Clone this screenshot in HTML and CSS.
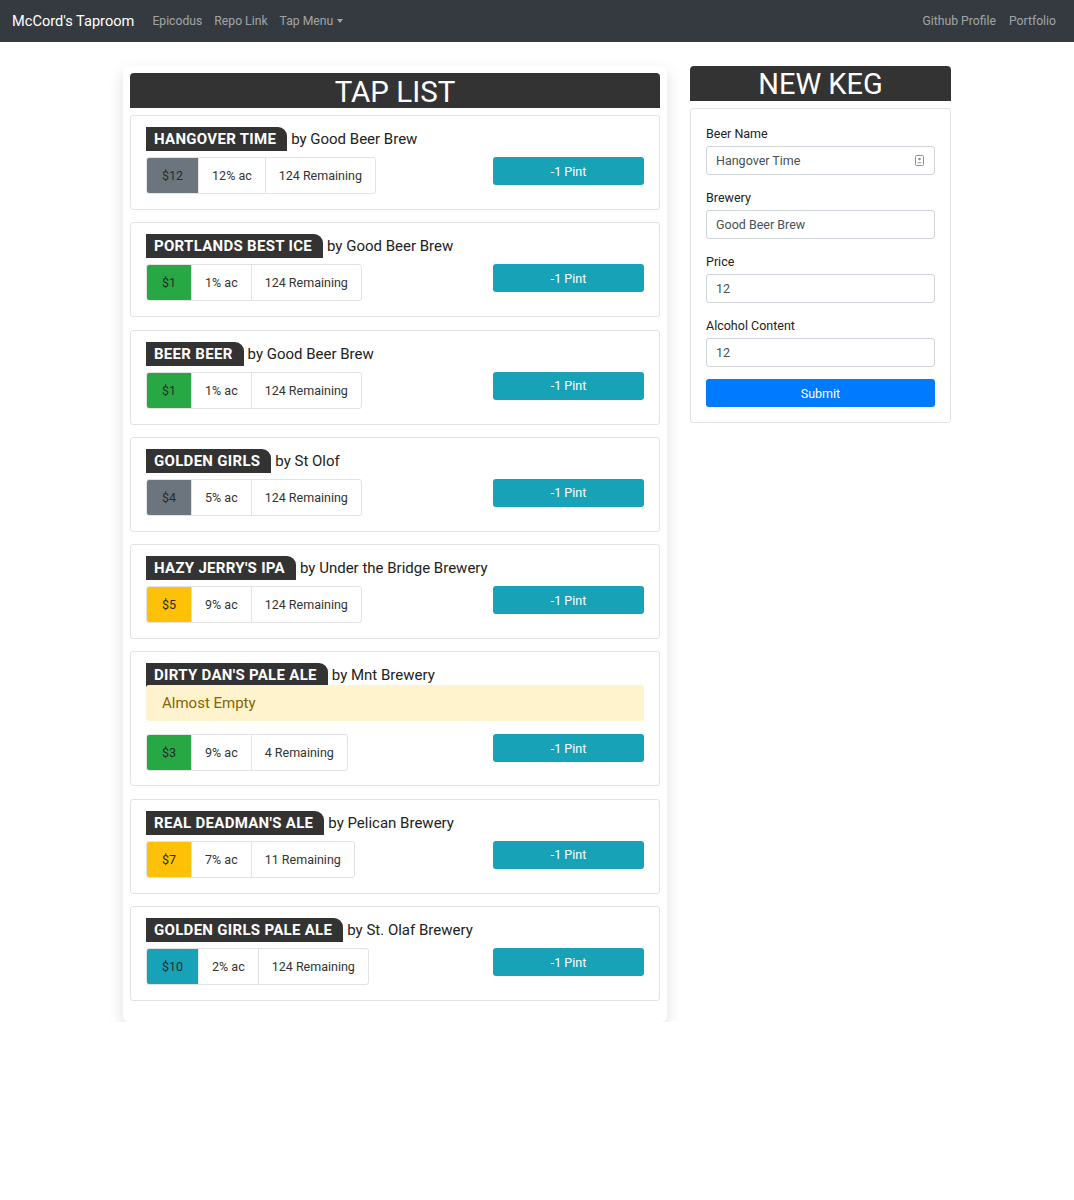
FILE: index.html
```html
<!DOCTYPE html>
<html>
<head>
<meta charset="utf-8">
<title>McCord's Taproom</title>
<link rel="stylesheet" href="styles.css">
</head>
<body>
<nav class="navbar">
  <div class="nav-left">
    <span class="brand">McCord's Taproom</span>
    <span class="nav-link">Epicodus</span>
    <span class="nav-link">Repo Link</span>
    <span class="nav-link dropdown">Tap Menu<span class="caret"></span></span>
  </div>
  <div class="nav-right">
    <span class="nav-link">Github Profile</span>
    <span class="nav-link">Portfolio</span>
  </div>
</nav>

<main class="main">
  <section class="tap-panel">
    <h1 class="panel-head tap-head">TAP LIST</h1>

    <div class="keg">
      <div class="keg-title"><span class="keg-name">HANGOVER TIME</span><span class="keg-by">by Good Beer Brew</span></div>
      <div class="keg-row">
        <div class="keg-info"><span class="cell price gray">$12</span><span class="cell">12% ac</span><span class="cell">124 Remaining</span></div>
        <button class="pint">-1 Pint</button>
      </div>
    </div>

    <div class="keg">
      <div class="keg-title"><span class="keg-name">PORTLANDS BEST ICE</span><span class="keg-by">by Good Beer Brew</span></div>
      <div class="keg-row">
        <div class="keg-info"><span class="cell price green">$1</span><span class="cell">1% ac</span><span class="cell">124 Remaining</span></div>
        <button class="pint">-1 Pint</button>
      </div>
    </div>

    <div class="keg">
      <div class="keg-title"><span class="keg-name">BEER BEER</span><span class="keg-by">by Good Beer Brew</span></div>
      <div class="keg-row">
        <div class="keg-info"><span class="cell price green">$1</span><span class="cell">1% ac</span><span class="cell">124 Remaining</span></div>
        <button class="pint">-1 Pint</button>
      </div>
    </div>

    <div class="keg">
      <div class="keg-title"><span class="keg-name">GOLDEN GIRLS</span><span class="keg-by">by St Olof</span></div>
      <div class="keg-row">
        <div class="keg-info"><span class="cell price gray">$4</span><span class="cell">5% ac</span><span class="cell">124 Remaining</span></div>
        <button class="pint">-1 Pint</button>
      </div>
    </div>

    <div class="keg">
      <div class="keg-title"><span class="keg-name">HAZY JERRY'S IPA</span><span class="keg-by">by Under the Bridge Brewery</span></div>
      <div class="keg-row">
        <div class="keg-info"><span class="cell price yellow">$5</span><span class="cell">9% ac</span><span class="cell">124 Remaining</span></div>
        <button class="pint">-1 Pint</button>
      </div>
    </div>

    <div class="keg tall">
      <div class="keg-title"><span class="keg-name">DIRTY DAN'S PALE ALE</span><span class="keg-by">by Mnt Brewery</span></div>
      <div class="alert">Almost Empty</div>
      <div class="keg-row after-alert">
        <div class="keg-info"><span class="cell price green">$3</span><span class="cell">9% ac</span><span class="cell">4 Remaining</span></div>
        <button class="pint">-1 Pint</button>
      </div>
    </div>

    <div class="keg">
      <div class="keg-title"><span class="keg-name">REAL DEADMAN'S ALE</span><span class="keg-by">by Pelican Brewery</span></div>
      <div class="keg-row">
        <div class="keg-info"><span class="cell price yellow">$7</span><span class="cell">7% ac</span><span class="cell">11 Remaining</span></div>
        <button class="pint">-1 Pint</button>
      </div>
    </div>

    <div class="keg">
      <div class="keg-title"><span class="keg-name">GOLDEN GIRLS PALE ALE</span><span class="keg-by">by St. Olaf Brewery</span></div>
      <div class="keg-row">
        <div class="keg-info"><span class="cell price teal">$10</span><span class="cell">2% ac</span><span class="cell">124 Remaining</span></div>
        <button class="pint">-1 Pint</button>
      </div>
    </div>
  </section>

  <section class="keg-panel">
    <h1 class="panel-head keg-head">NEW KEG</h1>
    <form class="keg-form">
      <label class="field">
        <span class="label">Beer Name</span>
        <span class="input has-icon">Hangover Time
          <svg class="autofill" width="9" height="11" viewBox="0 0 9 11"><rect x="0.5" y="0.5" width="8" height="10" rx="1" fill="none" stroke="#8a8f94"/><circle cx="4.5" cy="4" r="1.3" fill="#8a8f94"/><path d="M2.3 8.2c0.4-1.4 4-1.4 4.4 0z" fill="#8a8f94"/></svg>
        </span>
      </label>
      <label class="field">
        <span class="label">Brewery</span>
        <span class="input">Good Beer Brew</span>
      </label>
      <label class="field">
        <span class="label">Price</span>
        <span class="input">12</span>
      </label>
      <label class="field last">
        <span class="label">Alcohol Content</span>
        <span class="input">12</span>
      </label>
      <button type="button" class="submit">Submit</button>
    </form>
  </section>
</main>
</body>
</html>
```

FILE: styles.css
```css
* { box-sizing: border-box; }
body {
  margin: 0;
  font-family: Roboto, "Noto Sans", "Liberation Sans", sans-serif;
  color: #212529;
  background: #fff;
}
.navbar {
  height: 42px;
  background: #343a40;
  display: flex;
  justify-content: space-between;
  align-items: center;
  padding: 0 18px 0 12px;
}
.nav-left, .nav-right { display: flex; align-items: center; }
.brand {
  color: #fff;
  font-size: 14.6px;
  margin-right: 18px;
}
.nav-link {
  color: rgba(255,255,255,0.55);
  font-size: 12.2px;
  margin-right: 12px;
}
.nav-right .nav-link { margin-right: 0; margin-left: 13px; }
.caret {
  display: inline-block;
  width: 0; height: 0;
  border-left: 3.5px solid transparent;
  border-right: 3.5px solid transparent;
  border-top: 4px solid rgba(255,255,255,0.55);
  margin-left: 4px;
  vertical-align: 2px;
}
.main {
  display: flex;
  align-items: flex-start;
  padding: 24px 0 0 123px;
  gap: 23px;
}
.tap-panel {
  width: 544px;
  padding: 7px 7px 21px;
  border-radius: 6px;
  box-shadow: 0 6px 16px rgba(0,0,0,0.13);
  background: #fff;
}
.panel-head {
  margin: 0;
  background: #333;
  color: #fff;
  font-weight: 400;
  text-align: center;
  border-radius: 4px 4px 0 0;
}
.tap-head {
  height: 35px;
  font-size: 29.5px;
  line-height: 38px;
  margin-bottom: 7px;
}
.keg {
  border: 1px solid #e3e3e3;
  border-radius: 3px;
  padding: 11px 15px 15px;
  margin-bottom: 12.3px;
  height: 95px;
}
.keg.tall { height: 135px; }
.keg:last-child { margin-bottom: 0; }
.keg-title { display: flex; align-items: flex-end; height: 24px; }
.keg-name {
  background: #333;
  color: #fff;
  font-weight: 700;
  font-size: 15px;
  height: 24px;
  line-height: 25px;
  padding: 0 11px 0 8px;
  border-radius: 0 9px 0 0;
  letter-spacing: 0.3px;
}
.keg-by {
  font-size: 15px;
  margin-left: 4px;
  line-height: 24px;
  color: #222;
}
.keg-row {
  display: flex;
  justify-content: space-between;
  align-items: flex-start;
  margin-top: 6px;
}
.keg-row.after-alert { margin-top: 13px; }
.keg-info {
  display: flex;
  height: 37px;
  border: 1px solid #e3e3e3;
  border-radius: 3px;
  overflow: hidden;
}
.cell {
  font-size: 12.5px;
  line-height: 35px;
  padding: 0 13px;
  border-left: 1px solid #e3e3e3;
  color: #333;
}
.cell:first-child { border-left: none; }
.price { padding: 0 15px; color: #2a2a2a; }
.gray { background: #6c757d; }
.green { background: #28a745; }
.yellow { background: #ffc107; }
.teal { background: #17a2b8; }
.pint {
  width: 151px;
  height: 28px;
  border: none;
  border-radius: 3px;
  background: #17a2b8;
  color: #fff;
  font-family: inherit;
  font-size: 12.5px;
  padding: 0;
}
.alert {
  background: #fff3cd;
  color: #856404;
  font-size: 15px;
  height: 36px;
  line-height: 36px;
  padding: 0 16px;
  border-radius: 3px;
  margin-top: -2px;
  position: relative;
}
.keg-panel { width: 261px; }
.keg-head {
  height: 35px;
  font-size: 29px;
  line-height: 37px;
  margin-bottom: 7px;
}
.keg-form {
  border: 1px solid #e3e3e3;
  border-radius: 3px;
  padding: 16px 15px 15px;
}
.field { display: block; margin-bottom: 14px; }
.field.last { margin-bottom: 12px; }
.label {
  display: block;
  font-size: 12.5px;
  line-height: 18px;
  color: #222;
  margin-bottom: 3px;
}
.input {
  display: flex;
  align-items: center;
  justify-content: space-between;
  height: 29px;
  border: 1px solid #ced4da;
  border-radius: 3px;
  padding: 0 10px 0 9px;
  font-size: 12.5px;
  color: #495057;
}
.autofill { flex-shrink: 0; }
.submit {
  display: block;
  width: 100%;
  height: 28px;
  border: none;
  border-radius: 3px;
  background: #007bff;
  color: #fff;
  font-family: inherit;
  font-size: 12.5px;
  padding: 0;
}
```
